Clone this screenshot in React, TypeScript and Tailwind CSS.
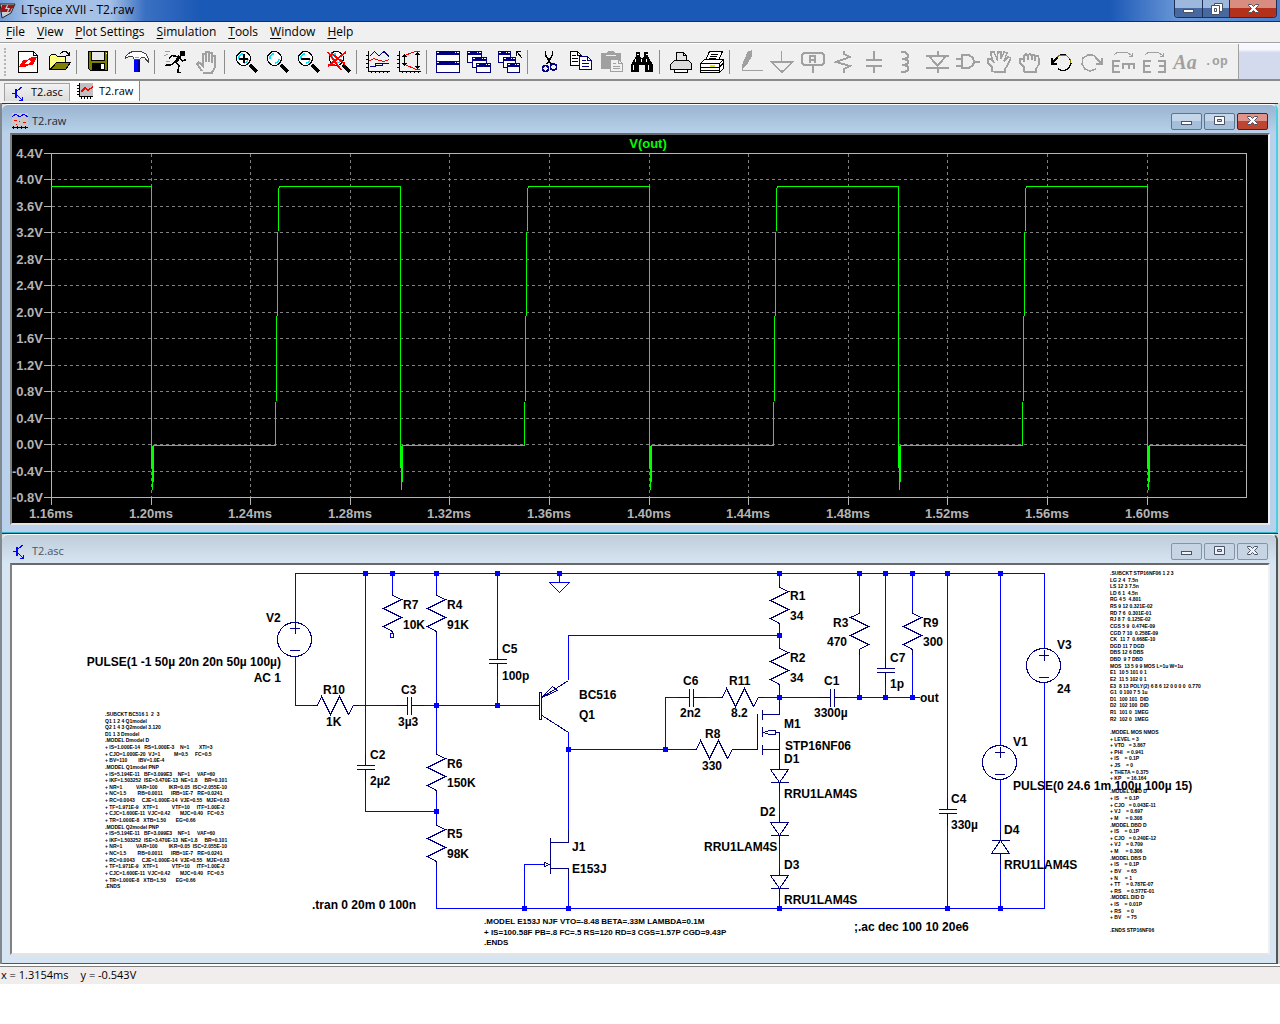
import React, { type ReactNode } from "react";

const NAVY = "#000080";
const GRAY = "#a0a0a0";

/* ---------- toolbar icons (24 x 24 grid) ---------- */

function Icon({ children, color = "#000" }: { children: ReactNode; color?: string }) {
  return (
    <svg
      viewBox="0 0 24 24"
      className="block size-6"
      fill="none"
      stroke={color}
      strokeWidth="1"
      shapeRendering="crispEdges"
      aria-hidden="true"
    >
      {children}
    </svg>
  );
}

function Lens({ children }: { children?: ReactNode }) {
  return (
    <Icon>
      <circle cx="9.5" cy="8.5" r="7" fill="#fff" stroke="#000" strokeWidth="1.2" />
      <path d="M5 9C5 6 6 4 9 4M14 9C14 11 12 13 10 13" stroke="#00e5ff" strokeWidth="1.6" />
      <path d="M16 15L23 22" strokeWidth="3" />
      {children}
    </Icon>
  );
}

function MiniWindow({ x, y, w, h }: { x: number; y: number; w: number; h: number }) {
  return (
    <g>
      <rect x={x + 0.5} y={y + 0.5} width={w - 1} height={h - 1} fill="#fff" stroke={NAVY} />
      <rect x={x} y={y} width={w} height="4" fill={NAVY} stroke="none" />
      <path d={`M${x + 1} ${y + 1.5}h2M${x + w - 5} ${y + 1.5}h1M${x + w - 3} ${y + 1.5}h2`} stroke="#fff" />
    </g>
  );
}

const icons: Record<string, ReactNode> = {
  new: (
    <Icon>
      <path d="M2.5 1.5H17.5L21.5 5.5V22.5H2.5Z" fill="#fff" />
      <path d="M17.5 1.5V5.5H21.5" />
      <path d="M3 17L7 10H11L16 7H21L17 15H13L9 17ZM9 14L13 14L15 11L12 10Z" fill="#f00" fillRule="evenodd" stroke="none" />
    </Icon>
  ),
  open: (
    <Icon>
      <path d="M2.5 19.5V6.5L4.5 4.5H8.5L10.5 6.5H18.5V12.5H9.5Z" fill="#ffff80" />
      <path d="M3.5 19.5L9.5 12.5H23.5L18.5 19.5Z" fill="#808000" />
      <path d="M13 4L16 1.5H19L22.5 5M22.5 2V5.5H19" />
    </Icon>
  ),
  save: (
    <Icon>
      <path d="M2.5 1.5H21.5V20.5H4.5L2.5 18.5Z" fill="#808000" />
      <rect x="5.5" y="1.5" width="13" height="9" fill="#e8e8e8" />
      <rect x="6" y="13" width="13" height="7" fill="#000" stroke="none" />
      <rect x="15" y="14" width="3" height="5" fill="#fff" stroke="none" />
      <path d="M19.5 3.5h1" stroke="#fff" />
    </Icon>
  ),
  hammer: (
    <Icon>
      <path d="M9 9H13V22H9Z" fill="#0000ff" stroke="none" />
      <path d="M13 9h2v13h-2z" fill={NAVY} stroke="none" />
      <path d="M0.5 8.5V6.5L3.5 3.5L7.5 1.5H15.5L20.5 3.5L23.5 8.5V12.5L19.5 7.5H16.5L14.5 9.5H9.5L7.5 6.5H3.5Z" fill="#fff" stroke="#404040" />
      <path d="M10 7.5H14" stroke="#a0a0a0" />
    </Icon>
  ),
  run: (
    <Icon>
      <path d="M16.5 1.5H20.5V5H16.5Z" fill="#000" />
      <path d="M16 6L11 13" strokeWidth="3" />
      <path d="M15 7L8.5 5.5L5 8M15 8L18.5 11L22.5 9.5M11 12L8 14.5L1 15.5M12 12L15 16L13.5 22.5H16.5" strokeWidth="1.6" />
      <path d="M1 1.5L6 2M0.5 5.5L4 4.5M2 11H6" stroke={GRAY} />
    </Icon>
  ),
  halt: (
    <Icon color={GRAY}>
      <path d="M8 22.5H17L19.5 18V6H17V13M7 21L2 14L3.5 12L8 16V3.5H10.5V12M10.5 12V1.5H13.5V12M13.5 3H16.5V12" strokeWidth="2" />
    </Icon>
  ),
  zoomIn: <Lens><path d="M5 8.5H14M9.5 4V13" strokeWidth="2" /></Lens>,
  zoomArea: <Lens />,
  zoomOut: <Lens><path d="M5 8.5H14" strokeWidth="2" /></Lens>,
  zoomFull: <Lens><path d="M1 2L14 20M19 2L1 16M2 15H8M4 3L18 14" stroke="#f00" strokeWidth="1.8" /></Lens>,
  autorange: (
    <Icon>
      <path d="M2.5 1V21.5H24M0 5.5H2M0 9.5H2M0 13.5H2M0 17.5H2M5.5 21V23M9.5 21V23M13.5 21V23M17.5 21V23M21.5 21V23" />
      <path d="M4 6L8.5 1.5L13 6L18 1.5L23 6.5M4 16.5H9.5V13.5H23M9.5 15.5H16V13.5" stroke={NAVY} />
      <path d="M3 11L8 8.5L12 10L18 11.5L23 9.5" stroke="#f00" />
    </Icon>
  ),
  axes: (
    <Icon>
      <path d="M2.5 1V21.5H24M0 5.5H2M0 9.5H2M0 13.5H2M0 17.5H2M5.5 21V23M9.5 21V23M13.5 21V23M17.5 21V23M21.5 21V23" />
      <path d="M7.5 5V15M5.5 7L7.5 5L9.5 7M5.5 13L7.5 15L9.5 13M20.5 3V18M18.5 5L20.5 3L22.5 5M18.5 16L20.5 18L22.5 16" />
      <path d="M9 5L18 1.5H23M9 15L19 19.5H23" stroke="#f00" />
    </Icon>
  ),
  tile: <Icon><MiniWindow x={0} y={1} w={24} h={11} /><MiniWindow x={0} y={11} w={24} h={12} /></Icon>,
  cascade: <Icon><MiniWindow x={0} y={1} w={15} h={12} /><MiniWindow x={5} y={7} w={15} h={11} /><MiniWindow x={9} y={13} w={15} h={10} /></Icon>,
  closeAll: (
    <Icon>
      <MiniWindow x={0} y={1} w={13} h={12} /><MiniWindow x={5} y={7} w={13} h={11} /><MiniWindow x={9} y={13} w={13} h={10} />
      <path d="M18.5 6V1.5H23M19 2L24 8" />
    </Icon>
  ),
  cut: (
    <Icon>
      <path d="M8.5 1V5L14 14M15.5 1V5L10 14" strokeWidth="1.6" />
      <circle cx="8.5" cy="18.5" r="3" stroke={NAVY} strokeWidth="1.6" />
      <circle cx="16.5" cy="17" r="3" stroke={NAVY} strokeWidth="1.6" />
    </Icon>
  ),
  copy: (
    <Icon>
      <path d="M2.5 1.5H9.5L13.5 5.5V15.5H2.5Z" fill="#fff" /><path d="M9.5 1.5V5.5H13M4 5.5H8M4 8.5H10M4 11.5H10" />
      <path d="M11.5 6.5H19.5L23.5 10.5V19.5H11.5Z" fill="#fff" stroke={NAVY} /><path d="M19.5 6.5V10.5H23M14 10.5H18M14 13.5H21M14 16.5H21" stroke={NAVY} />
    </Icon>
  ),
  paste: (
    <Icon color={GRAY}>
      <path d="M2 3H7L9 1H14L16 3H22V19H2Z" fill={GRAY} stroke="none" /><path d="M7 5.5H17" stroke="#f0f0f0" />
      <path d="M11.5 9.5H19.5L23.5 13.5V21.5H11.5Z" fill="#f0f0f0" /><path d="M19.5 9.5V13.5H23M14 13.5H17M14 16.5H21M14 18.5H21" />
    </Icon>
  ),
  find: (
    <Icon>
      <path d="M6 2H10V6L11 8H13L14 6V2H18V6L23 15V22H15V15H9V22H1V15L6 6Z" fill="#000" stroke="none" />
      <path d="M7 4.5h2M16 4.5h2M5.5 9v3M3.5 15v5M16.5 9v3M18.5 15v5M11.5 9v3" stroke="#fff" />
    </Icon>
  ),
  printSetup: (
    <Icon>
      <path d="M7.5 11.5V2.5H14.5L17.5 5.5V11.5" fill="#e4e4e4" /><path d="M1.5 14.5L5.5 10.5H19.5L22.5 13.5V19.5H1.5Z" fill="#dcdcdc" /><path d="M5.5 19.5V22.5H18.5V19.5" fill="#fff" /><path d="M14.5 2.5V5.5H17.5" />
    </Icon>
  ),
  print: (
    <Icon>
      <path d="M5.5 10.5L9.5 1.5H22.5L18.5 10.5" fill="#fff" /><path d="M11 4.5H18M10 6.5H17M9 8.5H16" />
      <path d="M0.5 13.5L4.5 9.5H23.5L19.5 13.5ZM0.5 13.5H19.5V22.5H0.5ZM19.5 13.5L23.5 9.5V18.5L19.5 22.5" fill="#fff" /><path d="M1 17.5H19L23 13.5M1 20.5H19" /><path d="M10 15.5H15" stroke="#e6e600" strokeWidth="2" />
    </Icon>
  ),
  wire: <Icon color={GRAY}><path d="M4 14L9 2L12 1V7L7 15L4 18Z" fill={GRAY} strokeWidth="1" /><path d="M3.5 14V20.5H24" /></Icon>,
  ground: <Icon color={GRAY}><path d="M11.5 1V12M1.5 12H22.5L12 22Z" strokeWidth="1.5" /></Icon>,
  label: (
    <Icon color={GRAY}>
      <path d="M3 3H21L23 5V13L21 15H3L1 13V5ZM12 15V23" strokeWidth="2" /><path d="M9 13V6H14V13M9 10H14" strokeWidth="2" />
    </Icon>
  ),
  resistor: <Icon color={GRAY}><path d="M12 1V4L18 7L4 12L18 16L12 19V23" strokeWidth="1.8" /></Icon>,
  capacitor: <Icon color={GRAY}><path d="M11 1V10M11 16V23M3 10H19M3 16H19" strokeWidth="2" /></Icon>,
  inductor: <Icon color={GRAY}><path d="M7 2H11L14 5V7L11 9H8M11 9L14 11V13L11 15H8M11 15L14 17V20L11 22H7" strokeWidth="2" /></Icon>,
  diode: <Icon color={GRAY}><path d="M1 5.5H24M4 6L12.5 16L21 6M1 17.5H24M12.5 1V6M12.5 17V23" strokeWidth="2" /></Icon>,
  gate: <Icon color={GRAY}><path d="M6 5H13L17 8L18 12L17 15L13 18H6ZM0 8.5H6M0 15.5H6M18 12H24" strokeWidth="2" /></Icon>,
  move: <Icon color={GRAY}><path d="M5 21V17L1 13V9H4L7 13L4 5V2H7L10 9L11 2H14V9L17 2L20 3L17 11L21 7L24 8L20 16L18 19V22H8Z" strokeWidth="1.5" /></Icon>,
  drag: <Icon color={GRAY}><path d="M6 22V17L2 13V9H6V12V6L8 4L10 6V10V5L12 4L14 6V10V5H16L17 7V11L18 6H20L21 9V14L18 19V22H6" strokeWidth="1.5" /></Icon>,
  undo: <Icon><path d="M7 8L11 5H17L21 9L22 14L19 19L14 21L9 19" stroke="#000" strokeWidth="1.3" /><path d="M8 7L11 5H17L21 9V13" stroke="#808000" /><path d="M2.5 8V13.5H8M3 13L8 8" strokeWidth="2" /></Icon>,
  redo: <Icon color={GRAY}><path d="M17 8L13 5H8L3 8L2 14L5 19L10 21L16 19" strokeWidth="1.4" /><path d="M21.5 8V13.5H16M21 13L16 8" strokeWidth="2" /></Icon>,
  rotate: <Icon color={GRAY}><path d="M3 5L7 2H16L21 6M21 3V6H18" /><path d="M9 11H2V22H9M2 16H8M11 14H24M12 14V19M18 14V19M23 14V19" strokeWidth="2" /></Icon>,
  mirror: <Icon color={GRAY}><path d="M3 5L7 2H16L21 6M21 3V6H18" /><path d="M9 11H2V22H9M2 16H8M16 11H23V22H16M23 16H17" strokeWidth="2" /></Icon>,
  text: <span className="block w-6 text-center font-['Liberation_Serif',serif] text-xl leading-6 font-bold text-[#a0a0a0] italic">Aa</span>,
  op: <span className="block w-6 text-center font-['Liberation_Mono',monospace] text-[13px] leading-6 font-bold text-[#a0a0a0]">.op</span>,
};

const toolGroups: [string, string][][] = [
  [["new", "New Schematic"], ["open", "Open"]],
  [["save", "Save"]],
  [["hammer", "Control Panel"]],
  [["run", "Run"], ["halt", "Halt"]],
  [["zoomIn", "Zoom In"], ["zoomArea", "Zoom Area"], ["zoomOut", "Zoom Back"], ["zoomFull", "Zoom Full Extents"]],
  [["autorange", "Autorange"], ["axes", "Axis Limits"]],
  [["tile", "Tile Windows"], ["cascade", "Cascade Windows"], ["closeAll", "Close All Windows"]],
  [["cut", "Cut"], ["copy", "Copy"], ["paste", "Paste"], ["find", "Find"]],
  [["printSetup", "Print Setup"], ["print", "Print"]],
  [
    ["wire", "Wire"], ["ground", "Ground"], ["label", "Label Net"], ["resistor", "Resistor"], ["capacitor", "Capacitor"],
    ["inductor", "Inductor"], ["diode", "Diode"], ["gate", "Component"], ["move", "Move"], ["drag", "Drag"],
    ["undo", "Undo"], ["redo", "Redo"], ["rotate", "Rotate"], ["mirror", "Mirror"], ["text", "Text"], ["op", "SPICE Directive"],
  ],
];

function Toolbar() {
  return (
    <div className="flex h-9 border-t border-white bg-[#f0f0f0]">
      <div className="flex h-full flex-1 items-center">
        <div className="mr-px ml-1 h-7 w-[7px] border-l-2 border-dotted border-[#b4b4b4]" />
        {toolGroups.map((group, i) => (
          <React.Fragment key={i}>
            {i > 0 && <div className="mr-[5px] ml-[2px] h-6 w-px bg-[#8c8c8c]" />}
            {group.map(([id, name]) => (
              <button key={id} type="button" aria-label={name} className="h-7 w-[31px] shrink-0 pr-[3px] pl-1">
                {icons[id]}
              </button>
            ))}
          </React.Fragment>
        ))}
      </div>
      <div className="w-[42px] border-l border-[#a0a0a0] bg-linear-to-b from-[#f6f8fd] from-15% to-[#d3daed] to-25%" />
    </div>
  );
}

/* ---------- small marks ---------- */

function BjtMark() {
  return (
    <svg viewBox="0 0 16 16" className="block size-4 shrink-0" fill="none" stroke="#0000ff" shapeRendering="crispEdges" aria-hidden="true">
      <path d="M1 8.5H5" /><path d="M5 4V13" strokeWidth="2" /><path d="M6 6L11.5 1.5M6 10L11 15M11 12V15H8" />
    </svg>
  );
}

function TraceMark() {
  return (
    <svg viewBox="0 0 16 16" className="block size-4 shrink-0" fill="none" shapeRendering="crispEdges" aria-hidden="true">
      <path d="M3 0H16V13H3Z" fill="#c0c0c0" />
      <path d="M2.5 0V13.5H16M0 2.5H2M0 5.5H2M0 8.5H2M0 11.5H2M4.5 14V16M7.5 14V16M10.5 14V16M13.5 14V16" stroke="#000" />
      <path d="M4 9L8 5L11 7L16 4" stroke="#f00" strokeWidth="1.6" />
    </svg>
  );
}

function PlotMark() {
  return (
    <svg viewBox="0 0 16 16" className="block size-4 shrink-0" fill="none" shapeRendering="crispEdges" aria-hidden="true">
      <path d="M0 0H16V14H0Z" fill="#c8c8c8" />
      <path d="M0 4L4 1L8 4L12 1L16 4" stroke="#0000ff" />
      <path d="M2 7.5H5M11 9.5H14M7 8.5H8M4 11.5H5" stroke="#f00" strokeWidth="1.5" />
      <path d="M0 14.5H16M1.5 13V16M5.5 13V16M9.5 13V16M13.5 13V16" stroke="#000" />
    </svg>
  );
}

function Glyph({ kind, soft = false }: { kind: "min" | "max" | "restore" | "close"; soft?: boolean }) {
  const fill = soft ? "#eef3f9" : "#fff";
  return (
    <svg viewBox="0 0 13 12" className="block h-3 w-[13px]" fill={fill} stroke="#4a5264" aria-hidden="true">
      {kind === "min" && <rect x="1.5" y="6.5" width="10" height="3" />}
      {kind === "max" && <path d="M1.5 1.5H11.5V9.5H1.5ZM4.5 4.5V6.5H8.5V4.5Z" fillRule="evenodd" />}
      {kind === "restore" && (
        <g><path d="M4.5 0.5H12.5V8.5H4.5Z" /><path d="M1.5 2.5H9.5V11.5H1.5ZM4.5 5.5V8.5H6.5V5.5Z" fillRule="evenodd" /></g>
      )}
      {kind === "close" && <path d="M1.5 1.5H4.5L6.5 3.5L8.5 1.5H11.5V2.5L8.5 5.5L11.5 8.5V9.5H8.5L6.5 7.5L4.5 9.5H1.5V8.5L4.5 5.5L1.5 2.5Z" />}
    </svg>
  );
}

/* ---------- document window ---------- */

function DocWindow({ title, mark, active, children }: { title: string; mark: ReactNode; active: boolean; children: ReactNode }) {
  const frame = active
    ? "rounded-t-md border-t border-t-white border-b border-b-[#31b5cf] bg-[#b9d1ea] border-r-2 border-r-[#48cfe6] pb-[7px]"
    : "rounded-t-md border-t border-t-white border-b border-b-[#555] bg-[#d7e4f2] border-r-2 border-r-[#555] pb-2";
  const bar = active ? "bg-linear-to-b from-[#99b4d1] to-[#b9d1ea] text-[#1c2a3c]" : "bg-linear-to-b from-[#bfcddb] to-[#d7e4f2] text-[#4c5560]";
  const plain = active
    ? "border-[#60738c] bg-linear-to-b from-[#c3d6ea] from-50% to-[#a5bfdb] to-50%"
    : "border-[#8593a8] bg-[#c6d4e4]";
  const close = active ? "border-[#5b1a1a] bg-linear-to-b from-[#e0938a] from-50% to-[#bd4531] to-50%" : "border-[#8593a8] bg-[#c6d4e4]";
  return (
    <section className="mr-[2px] border-t border-t-[#30343c]">
      <div className={frame}>
        <header className={`flex h-7 items-center rounded-t-md pt-1 pr-2 pl-[10px] ${bar}`}>
          {mark}
          <h2 className="ml-1 flex-1 pt-px">{title}</h2>
          <div className="flex gap-[2px]">
            <button type="button" aria-label="Minimize" className={`flex h-[17px] w-[31px] items-center justify-center rounded-xs border ${plain}`}><Glyph kind="min" soft={!active} /></button>
            <button type="button" aria-label="Maximize" className={`flex h-[17px] w-[31px] items-center justify-center rounded-xs border ${plain}`}><Glyph kind="max" soft={!active} /></button>
            <button type="button" aria-label="Close" className={`flex h-[17px] w-[31px] items-center justify-center rounded-xs border ${close}`}><Glyph kind="close" soft={!active} /></button>
          </div>
        </header>
        <div className="mr-1.5 ml-2 border-2 border-t-[#696969] border-r-[#f0f0f0] border-b-[#e6e3e3] border-l-[#808080]">{children}</div>
      </div>
    </section>
  );
}

/* ---------- waveform plot ---------- */

const vLabels = ["4.4V", "4.0V", "3.6V", "3.2V", "2.8V", "2.4V", "2.0V", "1.6V", "1.2V", "0.8V", "0.4V", "0.0V", "-0.4V", "-0.8V"];
const tLabels = ["1.16ms", "1.20ms", "1.24ms", "1.28ms", "1.32ms", "1.36ms", "1.40ms", "1.44ms", "1.48ms", "1.52ms", "1.56ms", "1.60ms"];
const vY = (i: number) => 153 + Math.round((i * 344) / 13);
const tX = (i: number) => 51 + Math.round(i * 99.6);
const falls = [151, 400, 649, 898, 1147];
const rises = [275, 524, 773, 1022];

function tracePath() {
  let d = "M51 186.5";
  falls.forEach((f, i) => {
    d += `H${f + 0.5}V445L${f + 1.5} 490L${f + 2.5} 445.5`;
    if (rises[i]) {
      const r = rises[i];
      d += `H${r + 0.5}L${r + 3.5} 190L${r + 4.5} 186.5`;
    }
  });
  return d + "H1246";
}

function Plot() {
  return (
    <svg viewBox="12 135 1256 388" className="block w-full bg-black" fontFamily="'Liberation Sans', Arial, sans-serif" fontSize="13" fontWeight="700" role="img" aria-label="V(out) against time">
      <g shapeRendering="crispEdges" fill="none">
        <g stroke="#808080" strokeDasharray="3 3">
          {vLabels.slice(1, -1).map((l, i) => <path key={l} d={`M52 ${vY(i + 1) + 0.5}H1246`} />)}
          {tLabels.slice(1).map((l, i) => <path key={l} d={`M${tX(i + 1) + 0.5} 154V497`} />)}
        </g>
        <g stroke="#b4b4b4">
          <path d="M51.5 153.5H1246.5V497.5H51.5Z" />
          {vLabels.map((l, i) => <path key={l} d={`M44 ${vY(i) + 0.5}H51`} />)}
          {tLabels.map((l, i) => <path key={l} d={`M${tX(i) + 0.5} 498V505`} />)}
        </g>
        <path d={tracePath()} stroke="#00ff00" />
        {falls.map((f) => <path key={f} d={`M${f + 2} 446V482`} stroke="#00ff00" strokeWidth="2" />)}
      </g>
      <g fill="#b4b4b4">
        {vLabels.map((l, i) => <text key={l} x="43" y={vY(i) + 5} textAnchor="end">{l}</text>)}
        {tLabels.map((l, i) => <text key={l} x={tX(i)} y="518" textAnchor="middle">{l}</text>)}
      </g>
      <text x="648" y="148" textAnchor="middle" fill="#00ff00">V(out)</text>
    </svg>
  );
}

/* ---------- schematic ---------- */

const resV = (x: number, y: number, s = 1) =>
  `M${x} ${y - 5}V${y}L${x + 9 * s} ${y + 4}L${x - 9 * s} ${y + 13}L${x + 9 * s} ${y + 22}L${x - 9 * s} ${y + 31}L${x} ${y + 36}V${y + 41}`;
const resH = (x: number, y: number) =>
  `M${x - 5} ${y}H${x}L${x + 4} ${y - 9}L${x + 13} ${y + 9}L${x + 22} ${y - 9}L${x + 31} ${y + 9}L${x + 36} ${y}H${x + 41}`;
const capV = (x: number, y: number) => `M${x - 9} ${y}H${x + 9}M${x - 9} ${y + 4}H${x + 9}M${x} ${y}V${y - 12}M${x} ${y + 4}V${y + 16}`;
const capH = (x: number, y: number) => `M${x} ${y - 9}V${y + 9}M${x + 4} ${y - 9}V${y + 9}M${x} ${y}H${x - 12}M${x + 4} ${y}H${x + 16}`;
const diode = (x: number, y: number) => `M${x - 9} ${y}H${x + 9}L${x} ${y + 13}ZM${x - 9} ${y + 13}H${x + 9}M${x} ${y}V${y - 8}M${x} ${y + 13}V${y + 21}`;

const wires = [
  "M295.5 622V573.5H1044.5V648", "M295.5 656V705.5H317", "M353 705.5H407", "M411 705.5H540", "M365.5 573V765", "M365.5 770V811.5H436.5",
  "M392.5 573V595", "M436.5 573V595M436.5 631V754M436.5 790V825M436.5 861V908.5H1044.5V682", "M497.5 573V659M497.5 664V705",
  "M559.5 573V582M549.5 582.5H569.5L559.5 592.5Z", "M568.5 680V635.5H779.5", "M568.5 732V843M568.5 749.5H697M733 749.5H757",
  "M665.5 749V697.5H690M694 697.5H722M758 697.5H830M835 697.5H920", "M524.5 908V864.5H545M568.5 868V908",
  "M779.5 573V587M779.5 623V648M779.5 684V714M779.5 750V770M779.5 782V823M779.5 835V876M779.5 888V908",
  "M859.5 573V613M859.5 649V697M885.5 573V669M885.5 673V697M912.5 573V613M912.5 649V697",
  "M947.5 573V810M947.5 814V908M1000.5 573V745M1000.5 780V841M1000.5 853V908",
];
const symbols = [
  resV(392.5, 595.5), resV(436.5, 595.5), resV(436.5, 754.5), resV(436.5, 825.5), resV(779.5, 587.5), resV(779.5, 648.5),
  resV(859.5, 613.5, -1), resV(912.5, 613.5), resH(317.5, 705.5), resH(696.5, 749.5), resH(722.5, 697.5),
  capV(365.5, 765.5), capV(497.5, 659.5), capV(885.5, 668.5), capV(947.5, 809.5), capH(407.5, 705.5), capH(689.5, 697.5), capH(830.5, 697.5),
  diode(779.5, 769.5), diode(779.5, 822.5), diode(779.5, 875.5),
  "M991.5 840.5H1009.5M991.5 853.5H1009.5L1000.5 840.5ZM1000.5 832V840M1000.5 853V864",
  "M290 628.5H300M295.5 623V634M290 650.5H300M995 752.5H1005M1000.5 747V758M995 774.5H1005M1039 655.5H1049M1044.5 650V661M1039 677.5H1049",
  "M542 697.5L568.5 680.5M542 697.5L552.5 686.5L557.5 690.5ZM542 715.5L568.5 732.5M533 705.5H540",
  "M550.5 838V874M550 842.5H568.5V830M550 868.5H568.5V880M544.5 862.5L549.5 864.5L544.5 866.5Z",
  "M757.5 714V749.5H738M762.5 710V720M762 714.5H779.5V702M762.5 727V737M762.5 745V755M762 749.5H779.5M763 732.5L770 730.5H775.5V734.5H770L763 732.5M776 732.5H779.5V762",
];
const dots: [number, number][] = [
  [365, 573], [392, 573], [436, 573], [497, 573], [559, 573], [779, 573], [859, 573], [885, 573], [912, 573], [947, 573], [1000, 573],
  [436, 705], [497, 705], [436, 811], [568, 749], [665, 749], [779, 635], [779, 697], [859, 697], [885, 697], [912, 697],
  [524, 908], [568, 908], [779, 908], [947, 908], [1000, 908],
];
const labels: [number, number, string][] = [
  [266, 622, "V2"], [403, 609, "R7"], [403, 629, "10K"], [447, 609, "R4"], [447, 629, "91K"], [323, 694, "R10"], [326, 726, "1K"],
  [401, 694, "C3"], [398, 726, "3µ3"], [370, 759, "C2"], [370, 785, "2µ2"], [447, 768, "R6"], [447, 787, "150K"], [447, 838, "R5"],
  [447, 858, "98K"], [312, 909, ".tran 0 20m 0 100n"], [502, 653, "C5"], [502, 680, "100p"], [579, 699, "BC516"], [579, 719, "Q1"],
  [683, 685, "C6"], [680, 717, "2n2"], [729, 685, "R11"], [731, 717, "8.2"], [705, 738, "R8"], [702, 770, "330"], [572, 851, "J1"],
  [572, 873, "E153J"], [790, 600, "R1"], [790, 620, "34"], [790, 662, "R2"], [790, 682, "34"], [824, 685, "C1"], [814, 717, "3300µ"],
  [784, 728, "M1"], [785, 750, "STP16NF06"], [784, 763, "D1"], [784, 798, "RRU1LAM4S"], [760, 816, "D2"], [704, 851, "RRU1LAM4S"],
  [784, 869, "D3"], [784, 904, "RRU1LAM4S"], [833, 627, "R3"], [827, 646, "470"], [923, 627, "R9"], [923, 646, "300"], [890, 662, "C7"],
  [890, 688, "1p"], [920, 702, "out"], [1013, 746, "V1"], [1013, 790, "PULSE(0 24.6 1m 100µ 100µ 15)"], [951, 803, "C4"], [951, 829, "330µ"],
  [1004, 834, "D4"], [1004, 869, "RRU1LAM4S"], [1057, 649, "V3"], [1057, 693, "24"], [854, 931, ";.ac dec 100 10 20e6"],
];

const pnpModel = [
  "+ IS=5.194E-11   BF=3.099E3    NF=1     VAF=60",
  "+ IKF=1.503252  ISE=3.470E-13  NE=1.8     BR=0.101",
  "+ NR=1          VAR=100        IKR=0.05  ISC=2.055E-10",
  "+ NC=1.5        RB=0.0011      IRB=1E-7   RE=0.0241",
  "+ RC=0.0043     CJE=1.000E-14  VJE=0.55   MJE=0.63",
  "+ TF=1.971E-9   XTF=1          VTF=10     ITF=1.00E-2",
  "+ CJC=1.600E-11  VJC=0.42       MJC=0.40   FC=0.5",
  "+ TR=1.000E-8   XTB=1.50       EG=0.66",
];
const leftNetlist = [
  ".SUBCKT BC516 1  2  3", "Q1 1 2 4 Q1model", "Q2 1 4 3 Q2model 3.120", "D1 1 3 Dmodel", ".MODEL Dmodel D",
  "+ IS=1.000E-14   RS=1.000E-3    N=1       XTI=3", "+ CJO=1.000E-20  VJ=1          M=0.5     FC=0.5", "+ BV=110        IBV=1.0E-4",
  ".MODEL Q1model PNP", ...pnpModel, ".MODEL Q2model PNP", ...pnpModel, ".ENDS",
];
const rightNetlist = [
  ".SUBCKT STP16NF06 1 2 3", "LG 2 4  7.5n", "LS 12 3 7.5n", "LD 6 1  4.5n", "RG 4 5  4.801", "RS 9 12 0.321E-02", "RD 7 6  0.301E-01",
  "RJ 8 7  0.125E-02", "CGS 5 9  0.474E-09", "CGD 7 10  0.258E-09", "CK  11 7  0.668E-10", "DGD 11 7 DGD", "DBS 12 6 DBS", "DBD  9 7 DBD",
  "MOS  13 5 9 9 MOS L=1u W=1u", "E1  10 5 101 0 1", "E2  11 5 102 0 1", "E3  8 13 POLY(2) 6 8 6 12 0 0 0 0  0.770", "G1  0 100 7 5 1u",
  "D1  100 101  DID", "D2  102 100  DID", "R1  101 0  1MEG", "R2  102 0  1MEG", "", ".MODEL MOS NMOS", "+ LEVEL = 3", "+ VTO   = 3.867",
  "+ PHI   = 0.941", "+ IS    = 0.1P", "+ JS    = 0", "+ THETA = 0.375", "+ KP    = 16.164", "", ".MODEL DGD D", "+ IS    = 0.1P",
  "+ CJO   = 0.043E-11", "+ VJ    = 0.697", "+ M     = 0.308", ".MODEL DBD D", "+ IS    = 0.1P", "+ CJO   = 0.240E-12", "+ VJ    = 0.709",
  "+ M     = 0.306", ".MODEL DBS D", "+ IS    = 0.1P", "+ BV    = 65", "+ N     = 1", "+ TT    = 0.787E-07", "+ RS    = 0.577E-01",
  ".MODEL DID D", "+ IS    = 0.01P", "+ RS    = 0", "+ BV    = 75", "", ".ENDS STP16NF06",
];

function Netlist({ x, y, lines }: { x: number; y: number; lines: string[] }) {
  return (
    <g fontSize="5">
      {lines.map((line, i) => <text key={i} x={x} y={y + Math.round(i * 6.62)} className="whitespace-pre">{line}</text>)}
    </g>
  );
}

function Schematic() {
  return (
    <svg viewBox="12 565 1256 388" className="block w-full bg-white" fontFamily="'Liberation Sans', Arial, sans-serif" fontSize="12" fontWeight="700" role="img" aria-label="T2.asc schematic">
      <g fill="none" shapeRendering="crispEdges">
        <path d={wires.join("")} stroke="#0000ff" />
        <path d={symbols.join("")} stroke={NAVY} />
        <rect x="539.5" y="692.5" width="2" height="27" fill="#fff" stroke={NAVY} />
        <circle cx="294.5" cy="639.5" r="17" stroke={NAVY} />
        <circle cx="999.5" cy="762.5" r="17" stroke={NAVY} />
        <circle cx="1043.5" cy="665.5" r="17" stroke={NAVY} />
        <rect x="390.5" y="633.5" width="3" height="4" fill="#fff" stroke="#0000ff" />
        {dots.map(([x, y]) => <rect key={`${x}-${y}`} x={x - 2} y={y - 2} width="5" height="5" fill="#0000ff" />)}
      </g>
      <g fill="#000">
        {labels.map(([x, y, t]) => <text key={`${x}-${y}`} x={x} y={y}>{t}</text>)}
        <text x="281" y="666" textAnchor="end">PULSE(1 -1 50µ 20n 20n 50µ 100µ)</text>
        <text x="281" y="682" textAnchor="end">AC 1</text>
        <g fontSize="8">
          <text x="484" y="924">.MODEL E153J NJF VTO=-8.48 BETA=.33M LAMBDA=0.1M</text>
          <text x="484" y="935">+ IS=100.58F PB=.8 FC=.5 RS=120 RD=3 CGS=1.57P CGD=9.43P</text>
          <text x="484" y="945">.ENDS</text>
        </g>
        <Netlist x={105} y={716} lines={leftNetlist} />
        <Netlist x={1110} y={575} lines={rightNetlist} />
      </g>
    </svg>
  );
}

/* ---------- page ---------- */

const menus = ["File", "View", "Plot Settings", "Simulation", "Tools", "Window", "Help"];

export default function App() {
  return (
    <div className="bg-white font-['Open_Sans','Noto_Sans',sans-serif] text-[11px] text-black">
      <header className="flex h-[22px] items-start border-b border-[#1a2c52] bg-[linear-gradient(90deg,#6f9bd8_0,#a9c4e8_30px,#a5c0e6_110px,#3a70c2_145px,#1b59b6_200px,#1b59b6_1110px,#6b98d8_1180px,#4c80cc_100%)]">
        <svg viewBox="0 0 16 17" className="mt-[2px] block h-[17px] w-4" aria-hidden="true">
          <path d="M0 2H15L11 11L2 16Z" fill="#c8ccd4" stroke="#222" />
          <path d="M2 3H7L5 7H8L7 10H0ZM8 3H15L13 6H12L10 10H8L10 6H7Z" fill="#a01414" />
        </svg>
        <h1 className="ml-[5px] flex-1 text-xs leading-5">LTspice XVII - T2.raw</h1>
        <div className="mr-[3px] flex h-[18px] overflow-hidden rounded-b border border-t-0 border-[#1c2f55]">
          <button type="button" aria-label="Minimize" className="flex w-7 items-center justify-center border-r border-[#1c2f55] bg-linear-to-b from-[#9db8dd] from-50% to-[#47699f] to-50%"><Glyph kind="min" /></button>
          <button type="button" aria-label="Restore" className="flex w-[27px] items-center justify-center border-r border-[#1c2f55] bg-linear-to-b from-[#9db8dd] from-50% to-[#47699f] to-50%"><Glyph kind="restore" /></button>
          <button type="button" aria-label="Close" className="flex w-[46px] items-center justify-center bg-linear-to-b from-[#d98c80] from-50% to-[#b3311b] to-50%"><Glyph kind="close" /></button>
        </div>
      </header>
      <nav className="flex h-[21px] border-b border-[#a0a0a0] bg-[#f0f0f0] text-xs">
        {menus.map((m) => (
          <button key={m} type="button" className="px-1.5 leading-5"><span className="underline underline-offset-2">{m[0]}</span>{m.slice(1)}</button>
        ))}
      </nav>
      <Toolbar />
      <div className="flex h-6 items-start border-t-2 border-[#8a8a8a] bg-[#f0f0f0] pl-1">
        <button type="button" className="mt-[2px] flex h-[18px] w-[66px] items-center gap-1 border border-b-0 border-[#a0a0a0] bg-linear-to-b from-[#f2f2f2] to-[#dcdcdc] pl-[6px]"><BjtMark />T2.asc</button>
        <button type="button" className="flex h-5 w-[70px] items-center gap-[6px] border-r border-[#8a8a8a] bg-white pl-[7px]"><TraceMark />T2.raw</button>
      </div>
      <main className="border-l-2 border-[#808890] bg-[#d8d8d8]">
        <DocWindow title="T2.raw" mark={<PlotMark />} active><Plot /></DocWindow>
        <DocWindow title="T2.asc" mark={<BjtMark />} active={false}><Schematic /></DocWindow>
      </main>
      <footer className="mt-[2px] flex h-[18px] items-center gap-3 border-t border-[#808080] bg-[#f0edec] pl-px">
        <span>x = 1.3154ms</span><span>y = -0.543V</span>
      </footer>
    </div>
  );
}
